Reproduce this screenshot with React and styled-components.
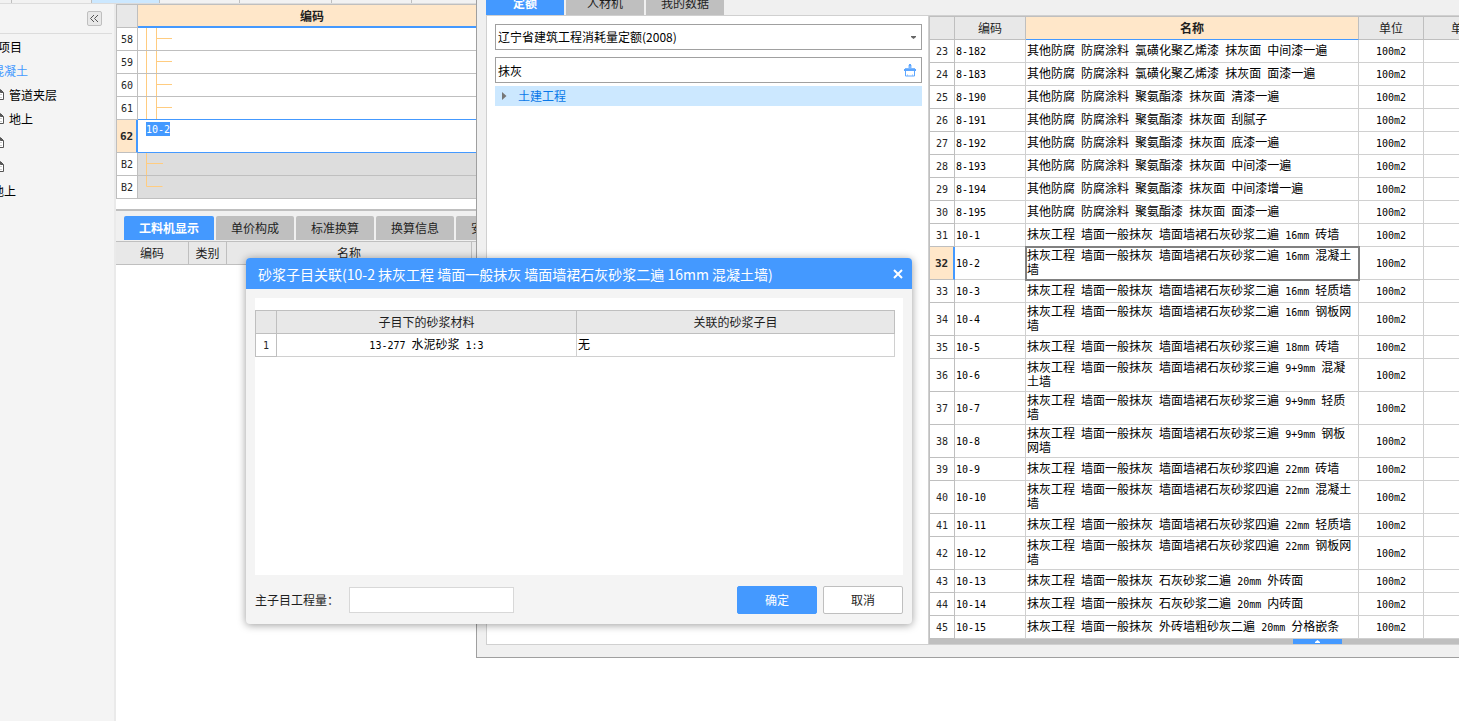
import React from 'react'
import styled, { createGlobalStyle } from 'styled-components'

const GlobalStyle = createGlobalStyle`
  * {
    box-sizing: border-box;
  }
  body {
    margin: 0;
    background: #ffffff;
    overflow: hidden;
  }
  body, button, input, select {
    font-family: 'Noto Sans CJK SC', 'Noto Sans', sans-serif;
    font-size: 12px;
    line-height: 14px;
    color: #1e1e1e;
  }
`

const Screen = styled.div`
  position: relative;
  display: flex;
  flex-direction: column;
  min-height: 100vh;
  overflow: hidden;
`

const TopStrip = styled.div`
  display: flex;
  height: 4px;
  background: #f2f2f2;
  border-bottom: 1px solid #dcdcdc;
`

const StripTab = styled.div`
  width: ${props => props.$width}px;
  background: ${props => (props.$active ? '#cce8ff' : '#f2f2f2')};
  border-right: 1px solid #bfbfbf;
`

const Workspace = styled.div`
  flex: 1;
  display: flex;
`

const Sidebar = styled.aside`
  width: 116px;
  flex-shrink: 0;
  overflow: hidden;
  background: #f4f4f4;
  border-right: 2px solid #eaeaea;
`

const SidebarHead = styled.div`
  display: flex;
  justify-content: flex-end;
  align-items: center;
  height: 30px;
  margin-right: 2px;
  padding-right: 10px;
  border-bottom: 1px solid #dcdcdc;
`

const CollapseButton = styled.button`
  display: flex;
  align-items: center;
  justify-content: center;
  width: 15px;
  height: 15px;
  padding: 0;
  border: 1px solid #bfbfbf;
  border-radius: 2px;
  background: #e8e8e8;
`

const ProjectTree = styled.ul`
  list-style: none;
  margin: 0 0 0 -8px;
  padding: 1px 0 0;
`

const ProjectItem = styled.li`
  display: flex;
  align-items: center;
  gap: 5px;
  height: 24px;
  padding-left: ${props => props.$indent}px;
  white-space: nowrap;
  color: ${props => (props.$active ? '#4499ff' : '#000000')};
`

const Main = styled.main`
  flex: 1;
  min-width: 0;
  overflow: hidden;
`

const Half = styled.span`
  font-family: 'DejaVu Sans Mono', monospace;
  font-size: ${props => (props.$strong ? 11 : 10)}px;
  line-height: 10px;
`

const Grid = styled.table`
  table-layout: fixed;
  border-collapse: separate;
  border-spacing: 0;
  width: ${props => props.$width};
  border-top: 1px solid #bfbfbf;
  border-left: ${props => (props.$open ? '0' : '1px')} solid #bfbfbf;
`

const HeadCell = styled.th`
  height: 23px;
  padding: 0;
  font-weight: ${props => (props.$current ? 'bold' : 'normal')};
  text-align: center;
  white-space: nowrap;
  background: ${props => (props.$current ? '#ffe7c9' : '#e8e8e8')};
  border-right: 1px solid #bfbfbf;
  border-bottom: ${props => props.$line || 1}px solid ${props => (props.$current ? '#4499ff' : '#bfbfbf')};
`

const NumCell = styled.th`
  height: ${props => (props.$tall ? 33 : 23)}px;
  padding: 0 0 2px;
  text-align: center;
  font-weight: ${props => (props.$current ? 'bold' : 'normal')};
  color: #262626;
  background: ${props => (props.$current ? '#ffe7c9' : '#ffffff')};
  border-right: ${props => (props.$current ? '2px solid #4499ff' : '1px solid #bfbfbf')};
  border-bottom: 1px solid #bfbfbf;
`

const Cell = styled.td`
  padding: 0 1px 2px;
  text-align: ${props => props.$align || 'left'};
  color: #000000;
  border-right: 1px solid #d0d0d0;
  border-bottom: 1px solid #d0d0d0;
  ${props => props.$selected && 'outline: 2px solid #808080; outline-offset: -1px;'}
`

const TreeCell = styled.td`
  padding: 0 8px;
  vertical-align: top;
  background: ${props => (props.$shade ? '#dddddd' : '#ffffff')};
  border-right: 1px solid #bfbfbf;
  border-bottom: 1px solid ${props => (props.$blue ? '#4499ff' : '#bfbfbf')};

  svg {
    display: block;
  }
`

const Editing = styled.mark`
  display: block;
  width: fit-content;
  height: 14px;
  margin-top: 2px;
  line-height: 12px;
  white-space: nowrap;
  background: #4499ff;
  color: #ffffff;
`

const Splitter = styled.div`
  height: 2px;
  margin-top: 10px;
  background: #bfbfbf;
`

const TabBar = styled.div`
  display: flex;
  gap: 2px;
  padding: ${props => props.$pad};
  background: #f0f0f0;
`

const Tab = styled.button`
  flex-shrink: 0;
  width: ${props => props.$width || 78}px;
  height: 24px;
  padding: 0;
  border: 0;
  border-radius: 2px 2px 0 0;
  background: ${props => (props.$active ? '#4499ff' : '#bfbfbf')};
  color: ${props => (props.$active ? '#ffffff' : '#1e1e1e')};
  font-weight: ${props => (props.$active ? 'bold' : 'normal')};
`

// query window, docked to the right edge and running off the top
const QueryWindow = styled.section`
  position: absolute;
  top: -9px;
  left: 476px;
  right: 0;
  padding: 0 0 12px 9px;
  background: #f0f0f0;
  border-left: 1px solid #9f9f9f;
  border-bottom: 1px solid #9f9f9f;
`

const QueryBody = styled.div`
  display: flex;
  background: #ffffff;
  border: 1px solid #d0d0d0;
  border-right: 0;
`

const QueryPanel = styled.div`
  display: flex;
  flex-direction: column;
  width: 442px;
  flex-shrink: 0;
  padding: 8px 6px 8px 8px;
  border-right: 1px solid #d0d0d0;
`

const Field = styled.div`
  display: flex;
  align-items: center;
  height: 26px;
  margin-bottom: ${props => props.$gap}px;
  padding-right: 5px;
  border: 1px solid #a0a0a0;
  background: #ffffff;
`

const LibrarySelect = styled.select`
  flex: 1;
  height: 24px;
  padding: 0 2px;
  border: 0;
  outline: 0;
  appearance: none;
  background: transparent;
  color: #000000;
`

const SearchInput = styled.input`
  flex: 1;
  height: 24px;
  padding: 0 2px;
  border: 0;
  outline: 0;
  background: transparent;
  color: #000000;
`

const IconButton = styled.button`
  display: flex;
  padding: 0;
  border: 0;
  background: transparent;
`

const ChapterRow = styled.div`
  display: flex;
  align-items: center;
  gap: 11px;
  height: 20px;
  padding-left: 7px;
  background: #cce8ff;
  color: #0a78e8;
`

const QuotaPane = styled.div`
  flex: 1;
  min-width: 0;
  overflow: hidden;
`

const ScrollTrack = styled.div`
  display: flex;
  height: 5px;
  padding-left: 364px;
  background: #bfbfbf;
`

const ScrollHandle = styled.button`
  display: flex;
  justify-content: center;
  width: 49px;
  height: 5px;
  padding: 1px 0 0;
  border: 0;
  background: #4499ff;
`

const Dialog = styled.div`
  position: absolute;
  top: 258px;
  left: 246px;
  width: 666px;
  border-radius: 4px;
  overflow: hidden;
  background: #f4f4f4;
  box-shadow: 0 1px 8px rgba(0, 0, 0, 0.4);
`

const DialogTitle = styled.header`
  display: flex;
  align-items: center;
  justify-content: space-between;
  height: 31px;
  padding: 0 9px 0 12px;
  background: #4499ff;
  color: #ffffff;

  h2 {
    margin: 0;
    font-size: 14px;
    line-height: 20px;
    font-weight: normal;
    white-space: nowrap;
  }
`

const DialogContent = styled.div`
  height: 277px;
  margin: 9px 9px 11px;
  padding: 12px 8px 0 0;
  background: #ffffff;
`

const DialogFooter = styled.footer`
  display: flex;
  align-items: center;
  gap: 6px;
  padding: 0 9px 10px;
`

const AmountLabel = styled.label`
  display: flex;
  align-items: center;
  flex: 1;

  span {
    width: 94px;
  }
`

const AmountInput = styled.input`
  width: 165px;
  height: 26px;
  padding: 0 4px;
  border: 1px solid #d8d8d8;
  background: #ffffff;
`

const ActionButton = styled.button`
  width: 80px;
  height: 28px;
  padding: 0;
  border: 1px solid ${props => (props.$primary ? '#4499ff' : '#bfbfbf')};
  border-radius: 2px;
  background: ${props => (props.$primary ? '#4499ff' : '#ffffff')};
  color: ${props => (props.$primary ? '#ffffff' : '#1e1e1e')};
`

// latin runs are half width next to the chinese glyphs
function Mixed ({ text }) {
  return text.split(/([\x20-\x7e]+)/).filter(Boolean).map((part, i) => (
    /^[\x20-\x7e]/.test(part) ? <Half key={i}>{part}</Half> : part
  ))
}

function DocIcon () {
  return (
    <svg width="12" height="14" viewBox="0 0 12 14" fill="#ffffff" stroke="#555555">
      <path d="M1.5 1.5h7l3 3v7h-10z" />
      <path d="M8.5 2v2.5h2.5z" fill="#555555" />
      <path d="M3 6.5h7M3 9.5h7" stroke="#cccccc" />
    </svg>
  )
}

function BrushIcon () {
  return (
    <svg width="12" height="13" viewBox="0 0 12 13" fill="none">
      <path d="M4.5 1h3v3H11v3H1V4h3.5z" fill="#7db8ff" />
      <path d="M5 0h2v2H5zM0 5h12v2H0z" fill="#5ca6ff" />
      <path d="M1.5 7v5h9V7" stroke="#5ca6ff" fill="#ffffff" />
      <path d="M3.5 12v-1.500M8.500 12v-1.500" stroke="#8cc0ff" />
    </svg>
  )
}

function Branch ({ depth, last }) {
  return (
    <svg width="30" height="22" viewBox="0 0 30 22" fill="none" stroke="#ffcc80">
      {depth === 2
        ? <path d="M0.5 0v22M10.5 0v22M11 10.5h15" />
        : <path d={last ? 'M0.5 0v10.5h16' : 'M0.5 0v22M1 10.5h16'} />}
    </svg>
  )
}

const projects = [
  { text: '项目', indent: 6 },
  { text: '混凝土', indent: 0, active: true },
  { text: '管道夹层', indent: 0, icon: true },
  { text: '地上', indent: 0, icon: true },
  { text: '', indent: 0, icon: true },
  { text: '', indent: 0, icon: true },
  { text: '地上', indent: 0 }
]

const quotas = [
  [23, '8-182', '其他防腐 防腐涂料 氯磺化聚乙烯漆 抹灰面 中间漆一遍'],
  [24, '8-183', '其他防腐 防腐涂料 氯磺化聚乙烯漆 抹灰面 面漆一遍'],
  [25, '8-190', '其他防腐 防腐涂料 聚氨酯漆 抹灰面 清漆一遍'],
  [26, '8-191', '其他防腐 防腐涂料 聚氨酯漆 抹灰面 刮腻子'],
  [27, '8-192', '其他防腐 防腐涂料 聚氨酯漆 抹灰面 底漆一遍'],
  [28, '8-193', '其他防腐 防腐涂料 聚氨酯漆 抹灰面 中间漆一遍'],
  [29, '8-194', '其他防腐 防腐涂料 聚氨酯漆 抹灰面 中间漆增一遍'],
  [30, '8-195', '其他防腐 防腐涂料 聚氨酯漆 抹灰面 面漆一遍'],
  [31, '10-1', '抹灰工程 墙面一般抹灰 墙面墙裙石灰砂浆二遍 16mm 砖墙'],
  [32, '10-2', '抹灰工程 墙面一般抹灰 墙面墙裙石灰砂浆二遍 16mm 混凝土墙', true],
  [33, '10-3', '抹灰工程 墙面一般抹灰 墙面墙裙石灰砂浆二遍 16mm 轻质墙'],
  [34, '10-4', '抹灰工程 墙面一般抹灰 墙面墙裙石灰砂浆二遍 16mm 钢板网墙', true],
  [35, '10-5', '抹灰工程 墙面一般抹灰 墙面墙裙石灰砂浆三遍 18mm 砖墙'],
  [36, '10-6', '抹灰工程 墙面一般抹灰 墙面墙裙石灰砂浆三遍 9+9mm 混凝土墙', true],
  [37, '10-7', '抹灰工程 墙面一般抹灰 墙面墙裙石灰砂浆三遍 9+9mm 轻质墙', true],
  [38, '10-8', '抹灰工程 墙面一般抹灰 墙面墙裙石灰砂浆三遍 9+9mm 钢板网墙', true],
  [39, '10-9', '抹灰工程 墙面一般抹灰 墙面墙裙石灰砂浆四遍 22mm 砖墙'],
  [40, '10-10', '抹灰工程 墙面一般抹灰 墙面墙裙石灰砂浆四遍 22mm 混凝土墙', true],
  [41, '10-11', '抹灰工程 墙面一般抹灰 墙面墙裙石灰砂浆四遍 22mm 轻质墙'],
  [42, '10-12', '抹灰工程 墙面一般抹灰 墙面墙裙石灰砂浆四遍 22mm 钢板网墙', true],
  [43, '10-13', '抹灰工程 墙面一般抹灰 石灰砂浆二遍 20mm 外砖面'],
  [44, '10-14', '抹灰工程 墙面一般抹灰 石灰砂浆二遍 20mm 内砖面'],
  [45, '10-15', '抹灰工程 墙面一般抹灰 外砖墙粗砂灰二遍 20mm 分格嵌条']
]

function BudgetGrid () {
  return (
    <Grid $width="371px">
      <colgroup>
        <col style={{ width: 21 }} />
        <col />
      </colgroup>
      <thead>
        <tr>
          <HeadCell />
          <HeadCell $current $line={2}>编码</HeadCell>
        </tr>
      </thead>
      <tbody>
        {[58, 59, 60, 61].map(n => (
          <tr key={n}>
            <NumCell scope="row"><Half>{n}</Half></NumCell>
            <TreeCell $blue={n === 61}><Branch depth={2} /></TreeCell>
          </tr>
        ))}
        <tr>
          <NumCell scope="row" $tall $current><Half $strong>62</Half></NumCell>
          <TreeCell $blue><Editing><Half>10-2</Half></Editing></TreeCell>
        </tr>
        {[false, true].map(last => (
          <tr key={String(last)}>
            <NumCell scope="row"><Half>B2</Half></NumCell>
            <TreeCell $shade><Branch depth={1} last={last} /></TreeCell>
          </tr>
        ))}
      </tbody>
    </Grid>
  )
}

function QuotaGrid () {
  return (
    <Grid $width="574px">
      <colgroup>
        <col style={{ width: 25 }} />
        <col style={{ width: 71 }} />
        <col style={{ width: 333 }} />
        <col style={{ width: 65 }} />
        <col style={{ width: 79 }} />
      </colgroup>
      <thead>
        <tr>
          <HeadCell />
          <HeadCell>编码</HeadCell>
          <HeadCell $current>名称</HeadCell>
          <HeadCell>单位</HeadCell>
          <HeadCell>单价</HeadCell>
        </tr>
      </thead>
      <tbody>
        {quotas.map(([num, code, name, tall]) => (
          <tr key={num}>
            <NumCell scope="row" $tall={tall} $current={num === 32}>
              <Half $strong={num === 32}>{num}</Half>
            </NumCell>
            <Cell><Half>{code}</Half></Cell>
            <Cell $selected={num === 32}><Mixed text={name} /></Cell>
            <Cell $align="center"><Half>100m2</Half></Cell>
            <Cell />
          </tr>
        ))}
      </tbody>
    </Grid>
  )
}

function MortarDialog () {
  return (
    <Dialog role="dialog" aria-labelledby="mortar-title">
      <DialogTitle>
        <h2 id="mortar-title">砂浆子目关联(10-2 抹灰工程 墙面一般抹灰 墙面墙裙石灰砂浆二遍 16mm 混凝土墙)</h2>
        <IconButton aria-label="关闭">
          <svg width="10" height="10" viewBox="0 0 10 10" stroke="#ffffff" strokeWidth="2">
            <path d="M1 1l8 8M9 1l-8 8" />
          </svg>
        </IconButton>
      </DialogTitle>
      <DialogContent>
        <Grid $width="100%">
          <colgroup>
            <col style={{ width: 21 }} />
            <col style={{ width: 300 }} />
            <col />
          </colgroup>
          <thead>
            <tr>
              <HeadCell />
              <HeadCell>子目下的砂浆材料</HeadCell>
              <HeadCell>关联的砂浆子目</HeadCell>
            </tr>
          </thead>
          <tbody>
            <tr>
              <NumCell scope="row"><Half>1</Half></NumCell>
              <Cell $align="center"><Mixed text="13-277 水泥砂浆 1:3" /></Cell>
              <Cell>无</Cell>
            </tr>
          </tbody>
        </Grid>
      </DialogContent>
      <DialogFooter>
        <AmountLabel>
          <span>主子目工程量：</span>
          <AmountInput type="text" />
        </AmountLabel>
        <ActionButton $primary>确定</ActionButton>
        <ActionButton>取消</ActionButton>
      </DialogFooter>
    </Dialog>
  )
}

function App () {
  return (
    <Screen>
      <GlobalStyle />
      <TopStrip>
        <StripTab $width={12} />
        <StripTab $width={80} />
        <StripTab $width={68} $active />
        <StripTab $width={80} />
        <StripTab $width={92} />
        <StripTab $width={80} />
      </TopStrip>
      <Workspace>
        <Sidebar>
          <SidebarHead>
            <CollapseButton aria-label="收起">
              <svg width="9" height="9" viewBox="0 0 9 9" fill="none" stroke="#555555">
                <path d="M4 1L0.5 4.5L4 8M8 1L4.5 4.5L8 8" />
              </svg>
            </CollapseButton>
          </SidebarHead>
          <ProjectTree>
            {projects.map((item, i) => (
              <ProjectItem key={i} $indent={item.indent} $active={item.active}>
                {item.icon && <DocIcon />}
                {item.text}
              </ProjectItem>
            ))}
          </ProjectTree>
        </Sidebar>
        <Main>
          <BudgetGrid />
          <Splitter />
          <TabBar $pad="5px 0 1px 8px">
            <Tab $width={90} $active>工料机显示</Tab>
            <Tab>单价构成</Tab>
            <Tab>标准换算</Tab>
            <Tab>换算信息</Tab>
            <Tab>安装费用</Tab>
          </TabBar>
          <Grid $width="100%" $open>
            <colgroup>
              <col style={{ width: 73 }} />
              <col style={{ width: 38 }} />
              <col style={{ width: 245 }} />
              <col />
            </colgroup>
            <thead>
              <tr>
                <HeadCell>编码</HeadCell>
                <HeadCell>类别</HeadCell>
                <HeadCell>名称</HeadCell>
                <HeadCell />
              </tr>
            </thead>
          </Grid>
        </Main>
      </Workspace>
      <QueryWindow>
        <TabBar $pad="0">
          <Tab $active>定额</Tab>
          <Tab>人材机</Tab>
          <Tab>我的数据</Tab>
        </TabBar>
        <QueryBody>
          <QueryPanel>
            <Field $gap={7}>
              <LibrarySelect aria-label="定额库">
                <option>辽宁省建筑工程消耗量定额(2008)</option>
              </LibrarySelect>
              <svg width="5" height="3" viewBox="0 0 5 3" fill="#666666">
                <path d="M0 0h5v1L2.5 3L0 1z" />
              </svg>
            </Field>
            <Field $gap={3}>
              <SearchInput aria-label="查询" defaultValue="抹灰" />
              <IconButton aria-label="清空"><BrushIcon /></IconButton>
            </Field>
            <ChapterRow>
              <svg width="5" height="8" viewBox="0 0 5 8" fill="#777777">
                <path d="M0 0l4.5 4L0 8z" />
              </svg>
              土建工程
            </ChapterRow>
          </QueryPanel>
          <QuotaPane>
            <QuotaGrid />
            <ScrollTrack>
              <ScrollHandle aria-label="展开">
                <svg width="5" height="3" viewBox="0 0 5 3" fill="#ffffff">
                  <path d="M0 3V2L2.5 0L5 2v1z" />
                </svg>
              </ScrollHandle>
            </ScrollTrack>
          </QuotaPane>
        </QueryBody>
      </QueryWindow>
      <MortarDialog />
    </Screen>
  )
}

export default App
